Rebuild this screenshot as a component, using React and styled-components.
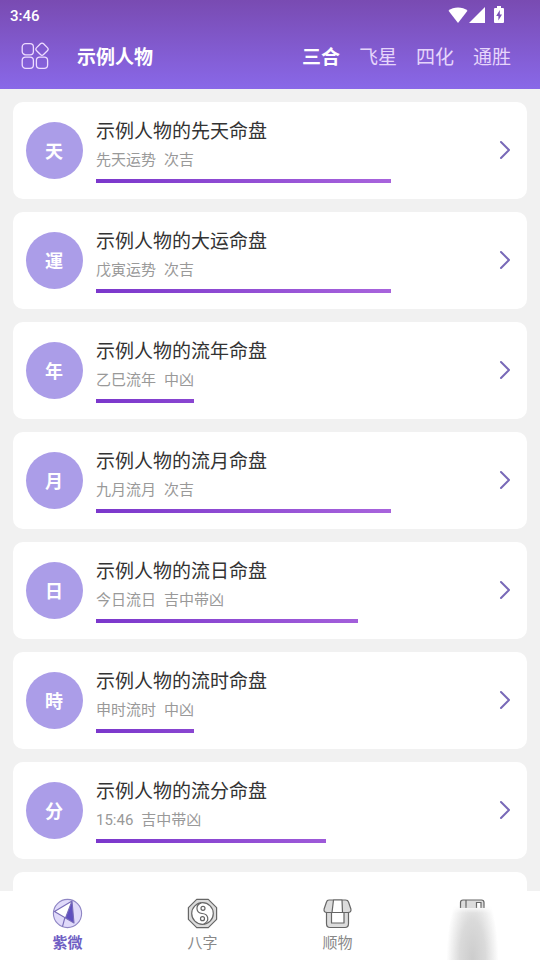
import { useState } from "react";
import styled, { createGlobalStyle } from "styled-components";

const TYPES = ["三合", "飞星", "四化", "通胜"];

const CHARTS = [
  { badge: "天", name: "先天命盘", period: "先天运势", luck: "次吉", score: 90 },
  { badge: "運", name: "大运命盘", period: "戊寅运势", luck: "次吉", score: 90 },
  { badge: "年", name: "流年命盘", period: "乙巳流年", luck: "中凶", score: 30 },
  { badge: "月", name: "流月命盘", period: "九月流月", luck: "次吉", score: 90 },
  { badge: "日", name: "流日命盘", period: "今日流日", luck: "吉中带凶", score: 80 },
  { badge: "時", name: "流时命盘", period: "申时流时", luck: "中凶", score: 30 },
  { badge: "分", name: "流分命盘", period: "15:46", luck: "吉中带凶", score: 70 },
];

const WifiIcon = () => (
  <svg width="20" height="16" viewBox="0 0 20 16" fill="#fff">
    <path d="M10 16 L0.5 3.8 C5.5 -0.6 14.5 -0.6 19.5 3.8 Z" />
  </svg>
);

const SignalIcon = () => (
  <svg width="16" height="16" viewBox="0 0 16 16" fill="#fff">
    <path d="M16 0 V16 H0 Z" />
  </svg>
);

const BatteryIcon = () => (
  <svg width="10" height="17" viewBox="0 0 10 17">
    <path
      d="M3 0 H7 V2 H9 Q10 2 10 3 V16 Q10 17 9 17 H1 Q0 17 0 16 V3 Q0 2 1 2 H3 Z"
      fill="#fff"
    />
    <path d="M5.8 4 L2.2 10 H4.4 V14.5 L8 8.6 H5.8 Z" fill="#7b50b8" />
  </svg>
);

const MenuIcon = () => (
  <svg
    width="28"
    height="28"
    viewBox="0 0 28 28"
    fill="none"
    stroke="#eedcff"
    strokeWidth="1.3"
  >
    <rect x="1.2" y="1.6" width="11.2" height="11.2" rx="3.4" />
    <rect x="1.2" y="15.2" width="11.2" height="11.2" rx="3.4" />
    <rect x="15.4" y="15.2" width="11.2" height="11.2" rx="3.4" />
    <rect x="16.1" y="2.3" width="9.8" height="9.8" rx="2.2" transform="rotate(45 21 7.2)" />
  </svg>
);

const ArrowIcon = () => (
  <svg
    width="12"
    height="21"
    viewBox="0 0 12 21"
    fill="none"
    stroke="#7869b8"
    strokeWidth="2"
    strokeLinecap="round"
    strokeLinejoin="round"
  >
    <path d="M2 2 L10 10 L2 18" />
  </svg>
);

const CompassIcon = () => (
  <svg width="31" height="31" viewBox="0.5 0.5 31 31" strokeLinejoin="round">
    <circle cx="16" cy="16" r="14.1" fill="#e0dafa" stroke="#8f86c4" strokeWidth="1.1" />
    <path d="M20.5 3.5 L3 14 L13.5 21 Z" fill="#fff" />
    <path d="M20.5 3.5 L22.5 25.5 L14 20.5 Z" fill="#5f4fbf" />
    <path
      d="M20.5 3.5 L3 14 L22.5 25.5 Z M20.5 3.5 L14 20.5 M13.4 20 L11 29"
      fill="none"
      stroke="#786cb8"
      strokeWidth="1.1"
    />
  </svg>
);

const TaijiIcon = () => (
  <svg
    width="31"
    height="31"
    viewBox="0.5 0.5 31 31"
    fill="none"
    stroke="#666"
    strokeWidth="1.2"
  >
    <path
      d="M10.2 1.9 H21.8 L30.1 10.2 V21.8 L21.8 30.1 H10.2 L1.9 21.8 V10.2 Z"
      fill="#dcdcdc"
      strokeLinejoin="round"
    />
    <circle cx="16" cy="16" r="10.8" fill="#fff" />
    <path d="M14.5 5.4 C8.5 8 9.5 15.5 15.5 16 C22 16.5 23.5 23 17.5 26.6" />
    <circle cx="16.5" cy="10.8" r="2" />
    <circle cx="16" cy="21.2" r="2" />
  </svg>
);

const ShopIcon = () => (
  <svg
    width="31"
    height="31"
    viewBox="0.5 0.5 31 31"
    stroke="#666"
    strokeWidth="1.2"
    strokeLinejoin="round"
  >
    <path d="M5 14 H27 V26 Q27 30 23.5 30 H8.5 Q5 30 5 26 Z" fill="#dcdcdc" />
    <path d="M10 14 H22.5 V25.5 H10 Z" fill="#fff" />
    <path
      d="M7.5 2.5 H24 Q26.5 2.5 27 4.5 L29.4 11.5 Q30 15 26.5 15 H5.5 Q2 15 2.6 11.5 L5 4.5 Q5.5 2.5 7.5 2.5 Z"
      fill="#dcdcdc"
    />
    <path d="M12 2.5 H20.5 L21 15 H10.5 Z" fill="#fff" />
  </svg>
);

const BookIcon = () => (
  <svg width="31" height="31" viewBox="0.5 0.5 31 31" stroke="#666" strokeWidth="1.2">
    <path d="M4 10.5 V5 Q4 2.5 6.5 2.5 H25 Q27.5 2.5 27.5 5 V10.5" fill="#dcdcdc" />
    <path d="M9.5 2.5 V10.5" />
    <path d="M20 10.5 V5 H24.5 V10.5" fill="#fff" />
  </svg>
);

const TABS = [
  { label: "紫微", Icon: CompassIcon },
  { label: "八字", Icon: TaijiIcon },
  { label: "顺物", Icon: ShopIcon },
  { label: "", Icon: BookIcon },
];

function App() {
  const [type, setType] = useState("三合");
  const [tab, setTab] = useState(0);

  return (
    <>
      <GlobalStyle />
      <SPage>
        <SHeader>
          <SStatusBar>
            <STime>3:46</STime>
            <SStatusIcons>
              <WifiIcon />
              <SignalIcon />
              <SBattery>
                <BatteryIcon />
              </SBattery>
            </SStatusIcons>
          </SStatusBar>
          <SToolbar>
            <SMenuButton aria-label="菜单">
              <MenuIcon />
            </SMenuButton>
            <SName>示例人物</SName>
            <STypes>
              {TYPES.map((t) => (
                <STypeButton key={t} $active={t === type} onClick={() => setType(t)}>
                  {t}
                </STypeButton>
              ))}
            </STypes>
          </SToolbar>
        </SHeader>

        <SList>
          {CHARTS.map((c) => (
            <SCard key={c.badge}>
              <SBadge>{c.badge}</SBadge>
              <SInfo>
                <STitle>示例人物的{c.name}</STitle>
                <SDetail>
                  <span>{c.period}</span>
                  <span>{c.luck}</span>
                </SDetail>
                <STrack>
                  {/* the gradient spans the whole track, the bar shows its first part */}
                  <SBar
                    style={{
                      width: `${c.score}%`,
                      backgroundSize: `${10000 / c.score}% 100%`,
                    }}
                  />
                </STrack>
              </SInfo>
              <ArrowIcon />
            </SCard>
          ))}
          <SCard />
        </SList>

        <STabBar>
          {TABS.map(({ label, Icon }, i) => (
            <STab
              key={i}
              $active={i === tab}
              aria-label={label || "更多"}
              onClick={() => setTab(i)}
            >
              <Icon />
              {label ? <span>{label}</span> : <SShade />}
            </STab>
          ))}
        </STabBar>
      </SPage>
    </>
  );
}

export default App;

const GlobalStyle = createGlobalStyle`
  * {
    box-sizing: border-box;
  }

  body {
    margin: 0;
    background: #f1f1f1;
    font-family: Roboto, "Noto Sans CJK SC", sans-serif;
  }

  button {
    padding: 0;
    border: none;
    background: none;
    font-family: inherit;
    cursor: pointer;
  }

  svg {
    display: block;
    flex-shrink: 0;
  }
`;

const SPage = styled.div`
  display: flex;
  flex-direction: column;
  height: 100vh;
`;

const SHeader = styled.header`
  flex-shrink: 0;
  background: linear-gradient(#794bb2, #8968e8);
`;

const SStatusBar = styled.div`
  display: flex;
  justify-content: space-between;
  align-items: center;
  height: 32px;
  padding: 0 36px 0 10px;
`;

const STime = styled.span`
  color: #fff;
  font-size: 15px;
  font-weight: 500;
`;

const SStatusIcons = styled.div`
  display: flex;
  align-items: center;
  gap: 1px;
  padding-bottom: 3px;
`;

const SBattery = styled.div`
  margin-left: 8px;
`;

const SToolbar = styled.div`
  display: flex;
  align-items: center;
  height: 57px;
  padding: 0 29px 10px 21px;
`;

const SMenuButton = styled.button`
  margin-right: 28px;
`;

const SName = styled.h1`
  margin: 0;
  color: #fff;
  font-size: 19px;
  font-weight: 700;
`;

const STypes = styled.nav`
  display: flex;
  gap: 19px;
  margin-left: auto;
`;

const STypeButton = styled.button`
  color: ${(p) => (p.$active ? "#fff" : "#e6d5fb")};
  font-size: 19px;
  font-weight: ${(p) => (p.$active ? 700 : 400)};
`;

const SList = styled.main`
  display: flex;
  flex: 1;
  flex-direction: column;
  gap: 13px;
  min-height: 0;
  padding: 13px;
  overflow-y: auto;
  scrollbar-width: none;
`;

const SCard = styled.article`
  display: flex;
  flex-shrink: 0;
  align-items: center;
  gap: 13px;
  min-height: 97px;
  padding: 0 16px 0 13px;
  border-radius: 10px;
  background: #fff;
`;

const SBadge = styled.div`
  display: flex;
  flex-shrink: 0;
  justify-content: center;
  align-items: center;
  width: 57px;
  height: 57px;
  padding: 0 1px 1px 0;
  border-radius: 50%;
  background: #ab9de8;
  color: #fff;
  font-size: 18px;
  font-weight: 700;
`;

const SInfo = styled.div`
  flex: 1;
`;

const STitle = styled.h2`
  margin: 0;
  color: #333;
  font-size: 19px;
  font-weight: 400;
  line-height: 30px;
`;

const SDetail = styled.div`
  display: flex;
  gap: 8px;
  color: #999;
  font-size: 15px;
  line-height: 26px;
`;

const STrack = styled.div`
  margin-right: 62px;
  padding: 6px 0 1px;
`;

const SBar = styled.div`
  height: 4px;
  background: linear-gradient(90deg, #7b37cc, #ad69de) no-repeat;
`;

const STabBar = styled.nav`
  display: flex;
  flex-shrink: 0;
  height: 69px;
  background: #fff;
`;

const STab = styled.button`
  position: relative;
  display: flex;
  flex: 1;
  flex-direction: column;
  align-items: center;
  padding-top: 7px;
  overflow: hidden;
  color: ${(p) => (p.$active ? "#6f5fc4" : "#888")};
  font-size: 15px;
  font-weight: ${(p) => (p.$active ? 700 : 400)};
  line-height: 28px;
`;

const SShade = styled.span`
  position: absolute;
  right: 0;
  bottom: 0;
  left: 0;
  height: 55px;
  background: radial-gradient(
    ellipse 26px 80px at 50% 100%,
    #cccccc,
    #dadada 50%,
    rgba(240, 240, 240, 0)
  );
  mask-image: linear-gradient(transparent, #000 8px);
`;
